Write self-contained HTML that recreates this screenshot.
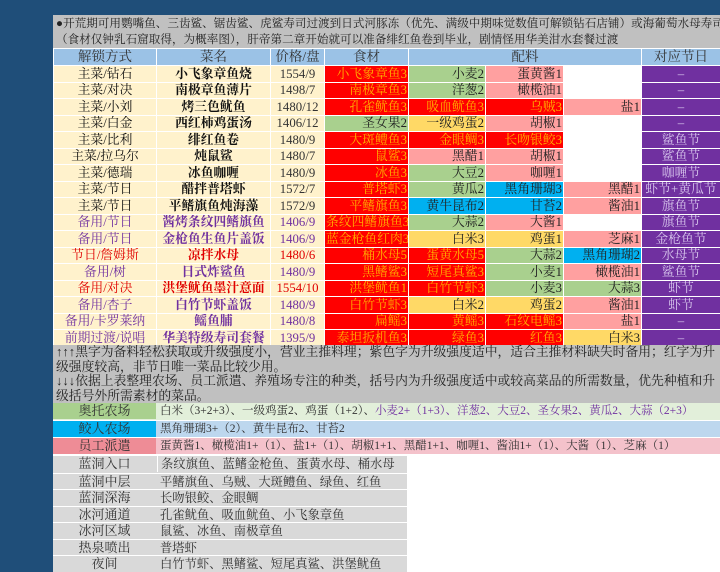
<!DOCTYPE html>
<html><head><meta charset="utf-8"><style>
*{margin:0;padding:0;box-sizing:border-box}
body{width:720px;height:572px;overflow:hidden;background:#fff;position:relative;font-family:"Liberation Serif","Noto Serif CJK SC",serif;}
.bgl{position:absolute;left:0;top:0;width:53px;height:572px;background:#1f4e79}
.bgt{position:absolute;left:0;top:0;width:720px;height:15px;background:#1f4e79}
.note{position:absolute;left:53px;width:667px;background:#c0c0c0;color:#222;font-size:11.6px;line-height:15.5px;padding-left:3px;white-space:nowrap;overflow:hidden}
table{position:absolute;left:53px;top:48px;width:667px;border-collapse:collapse;table-layout:fixed}
td{border:1px solid #fff;height:16.5px;font-size:12.8px;line-height:14px;white-space:nowrap;overflow:hidden;padding:0 1px;text-align:right}
tr.h td{background:#9bc2e6;color:#333;text-align:center;height:17px;font-size:13.5px}
td.a,td.n,td.p{background:#fff2cc;text-align:center;color:#111}
td.n{font-weight:bold}
td.p{color:#333}
.pu td.a,.pu td.n,.pu td.p{color:#7030a0}
.rd td.a,.rd td.n,.rd td.p{color:#e00000}
.R{background:#ff0000;color:#ffb000}
.G{background:#a9d08e;color:#222}
.P{background:#ffa0a0;color:#222}
.Y{background:#ffd966;color:#222}
.C{background:#00b0f0;color:#222}
.W{background:#fff}
.V{background:#7030a0;color:#d9c8ee;text-align:center!important}
.f{position:absolute;left:53px;height:17px;font-size:11.5px;line-height:16px;white-space:nowrap}
.f .k{position:absolute;left:0;top:0;width:103px;height:16px;text-align:center;font-size:13px;color:#333}
.f .v{position:absolute;left:104px;top:0;height:16px;padding-left:3px;color:#333}
.g .v{font-size:12.3px}
</style></head><body>
<div class="bgl"></div><div class="bgt"></div>
<div class="note" style="top:15px;height:33px;padding-top:1px">●开荒期可用鹦嘴鱼、三齿鲨、锯齿鲨、虎鲨寿司过渡到日式河豚冻（优先、满级中期味觉数值可解锁钻石店铺）或海葡萄水母寿司<br>（食材仅钟乳石窟取得，为概率图），肝帝第二章开始就可以准备绯红鱼卷到毕业，剧情怪用华美泔水套餐过渡</div>
<table>
<colgroup><col style="width:103px"><col style="width:114px"><col style="width:54px"><col style="width:84px"><col style="width:77px"><col style="width:78px"><col style="width:78px"><col style="width:79px"></colgroup>
<tr class="h"><td>解锁方式</td><td>菜名</td><td>价格/盘</td><td>食材</td><td colspan="3">配料</td><td>对应节日</td></tr>
<tr><td class="a">主菜/钻石</td><td class="n">小飞象章鱼烧</td><td class="p">1554/9</td><td class="R">小飞象章鱼3</td><td class="G">小麦2</td><td class="P">蛋黄酱1</td><td class="W"></td><td class="V">–</td></tr>
<tr><td class="a">主菜/对决</td><td class="n">南极章鱼薄片</td><td class="p">1498/7</td><td class="R">南极章鱼3</td><td class="G">洋葱2</td><td class="P">橄榄油1</td><td class="W"></td><td class="V">–</td></tr>
<tr><td class="a">主菜/小刘</td><td class="n">烤三色鱿鱼</td><td class="p">1480/12</td><td class="R">孔雀鱿鱼3</td><td class="R">吸血鱿鱼3</td><td class="R">乌贼3</td><td class="P">盐1</td><td class="V">–</td></tr>
<tr><td class="a">主菜/白金</td><td class="n">西红柿鸡蛋汤</td><td class="p">1406/12</td><td class="G">圣女果2</td><td class="Y">一级鸡蛋2</td><td class="P">胡椒1</td><td class="W"></td><td class="V">–</td></tr>
<tr><td class="a">主菜/比利</td><td class="n">绯红鱼卷</td><td class="p">1480/9</td><td class="R">大斑鳢鱼3</td><td class="R">金眼鲷3</td><td class="R">长吻银鲛3</td><td class="W"></td><td class="V">鲨鱼节</td></tr>
<tr><td class="a">主菜/拉乌尔</td><td class="n">炖鼠鲨</td><td class="p">1480/7</td><td class="R">鼠鲨3</td><td class="P">黑醋1</td><td class="P">胡椒1</td><td class="W"></td><td class="V">鲨鱼节</td></tr>
<tr><td class="a">主菜/德瑞</td><td class="n">冰鱼咖喱</td><td class="p">1480/9</td><td class="R">冰鱼3</td><td class="G">大豆2</td><td class="P">咖喱1</td><td class="W"></td><td class="V">咖喱节</td></tr>
<tr><td class="a">主菜/节日</td><td class="n">醋拌普塔虾</td><td class="p">1572/7</td><td class="R">普塔虾3</td><td class="G">黄瓜2</td><td class="C">黑角珊瑚3</td><td class="P">黑醋1</td><td class="V">虾节+黄瓜节</td></tr>
<tr><td class="a">主菜/节日</td><td class="n">平鳍旗鱼炖海藻</td><td class="p">1572/9</td><td class="R">平鳍旗鱼3</td><td class="C">黄牛昆布2</td><td class="C">甘苔2</td><td class="P">酱油1</td><td class="V">旗鱼节</td></tr>
<tr class="pu"><td class="a">备用/节日</td><td class="n">酱烤条纹四鳍旗鱼</td><td class="p">1406/9</td><td class="R">条纹四鳍旗鱼3</td><td class="G">大蒜2</td><td class="P">大酱1</td><td class="W"></td><td class="V">旗鱼节</td></tr>
<tr class="pu"><td class="a">备用/节日</td><td class="n">金枪鱼生鱼片盖饭</td><td class="p">1406/9</td><td class="R">蓝金枪鱼红肉3</td><td class="Y">白米3</td><td class="Y">鸡蛋1</td><td class="P">芝麻1</td><td class="V">金枪鱼节</td></tr>
<tr class="rd"><td class="a">节日/詹姆斯</td><td class="n">凉拌水母</td><td class="p">1480/6</td><td class="R">桶水母5</td><td class="R">蛋黄水母5</td><td class="G">大蒜2</td><td class="C">黑角珊瑚2</td><td class="V">水母节</td></tr>
<tr class="pu"><td class="a">备用/树</td><td class="n">日式炸鲨鱼</td><td class="p">1480/9</td><td class="R">黑鳍鲨3</td><td class="R">短尾真鲨3</td><td class="G">小麦1</td><td class="P">橄榄油1</td><td class="V">鲨鱼节</td></tr>
<tr class="rd"><td class="a">备用/对决</td><td class="n">洪堡鱿鱼墨汁意面</td><td class="p">1554/10</td><td class="R">洪堡鱿鱼1</td><td class="R">白竹节虾3</td><td class="G">小麦3</td><td class="G">大蒜3</td><td class="V">虾节</td></tr>
<tr class="pu"><td class="a">备用/杏子</td><td class="n">白竹节虾盖饭</td><td class="p">1480/9</td><td class="R">白竹节虾3</td><td class="Y">白米2</td><td class="Y">鸡蛋2</td><td class="P">酱油1</td><td class="V">虾节</td></tr>
<tr class="pu"><td class="a">备用/卡罗莱纳</td><td class="n">鳐鱼脯</td><td class="p">1480/8</td><td class="R">扁鳐3</td><td class="R">黄鳐3</td><td class="R">石纹电鳐3</td><td class="P">盐1</td><td class="V">–</td></tr>
<tr class="pu"><td class="a">前期过渡/说唱</td><td class="n">华美特级寿司套餐</td><td class="p">1395/9</td><td class="R">泰坦扳机鱼3</td><td class="R">绿鱼3</td><td class="R">红鱼3</td><td class="Y">白米3</td><td class="V">–</td></tr>
</table>
<div class="note" style="top:345px;height:58px;font-size:12.8px;line-height:14.5px">↑↑↑黑字为备料轻松获取或升级强度小，营业主推料理；紫色字为升级强度适中，适合主推材料缺失时备用；红字为升<br>级强度较高，非节日唯一菜品比较少用。<br>↓↓↓依据上表整理农场、员工派遣、养殖场专注的种类，括号内为升级强度适中或较高菜品的所需数量，优先种植和升<br>级括号外所需素材的菜品。</div>
<div class="f" style="top:403px;width:667px;background:#e2efda"><div class="k" style="background:#a9d08e">奥托农场</div><div class="v">白米（3+2+3）、一级鸡蛋2、鸡蛋（1+2）、<span style="color:#7030a0">小麦2+（1+3）、洋葱2、大豆2、圣女果2、黄瓜2、大蒜（2+3）</span></div></div>
<div class="f" style="top:420px;width:667px;background:#bdd7ee;border-top:1px solid #fff"><div class="k" style="background:#00b0f0">鲛人农场</div><div class="v">黑角珊瑚3+（2）、黄牛昆布2、甘苔2</div></div>
<div class="f" style="top:437px;width:667px;background:#f4c2cb;border-top:1px solid #fff"><div class="k" style="background:#ee8c96">员工派遣</div><div class="v">蛋黄酱1、橄榄油1+（1）、盐1+（1）、胡椒1+1、黑醋1+1、咖喱1、酱油1+（1）、大酱（1）、芝麻（1）</div></div>
<div class="f g" style="top:456px;width:354px;background:#d9d9d9"><div class="k">蓝洞入口</div><div class="v" style="border-left:1px solid #fff">条纹旗鱼、蓝鳍金枪鱼、蛋黄水母、桶水母</div></div>
<div class="f g" style="top:473px;width:354px;background:#d9d9d9;border-top:1px solid #fff"><div class="k">蓝洞中层</div><div class="v">平鳍旗鱼、乌贼、大斑鳢鱼、绿鱼、红鱼</div></div>
<div class="f g" style="top:489px;width:354px;background:#d9d9d9;border-top:1px solid #fff"><div class="k">蓝洞深海</div><div class="v">长吻银鲛、金眼鲷</div></div>
<div class="f g" style="top:506px;width:354px;background:#d9d9d9;border-top:1px solid #fff"><div class="k">冰河通道</div><div class="v">孔雀鱿鱼、吸血鱿鱼、小飞象章鱼</div></div>
<div class="f g" style="top:522px;width:354px;background:#d9d9d9;border-top:1px solid #fff"><div class="k">冰河区域</div><div class="v">鼠鲨、冰鱼、南极章鱼</div></div>
<div class="f g" style="top:539px;width:354px;background:#d9d9d9;border-top:1px solid #fff"><div class="k">热泉喷出</div><div class="v">普塔虾</div></div>
<div class="f g" style="top:555px;width:354px;background:#d9d9d9;border-top:1px solid #fff"><div class="k">夜间</div><div class="v">白竹节虾、黑鳍鲨、短尾真鲨、洪堡鱿鱼</div></div>
</body></html>
